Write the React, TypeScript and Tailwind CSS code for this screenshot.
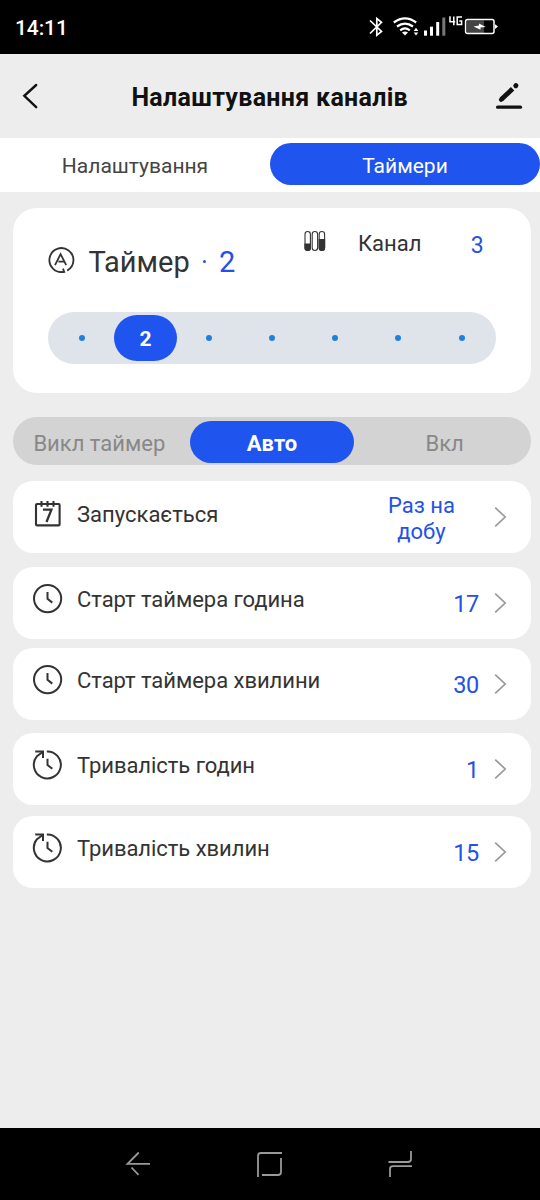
import type { ReactNode } from "react";

const CalendarIcon = () => (
  <svg className="mt-[19px] ml-[21px] h-[28px] w-[28px] shrink-0" viewBox="0 0 28 28" fill="none" stroke="#333" strokeWidth="2.1">
    <rect x="2" y="4" width="23.6" height="21.4" rx="1" />
    <path d="M7.5 1V6.8M13.5 1V6.8M19.5 1V6.8" />
    <path d="M9 9.6H17.4L12.5 22" strokeWidth="2.3" />
  </svg>
);

const ClockIcon = () => (
  <svg className="mt-[16px] ml-[19px] h-[32px] w-[32px] shrink-0" viewBox="0 0 32 32" fill="none" stroke="#333" strokeWidth="2">
    <circle cx="15.6" cy="15.6" r="13.6" />
    <path d="M15.5 9V15.8L20.3 19.6" />
  </svg>
);

const DurationIcon = () => (
  <svg className="mt-[16px] ml-[19px] h-[32px] w-[32px] shrink-0" viewBox="0 0 32 32" fill="none" stroke="#333" strokeWidth="2">
    <path d="M14.8 2.4A13.5 13.5 0 1 1 5 7.2L11 2.8" />
    <path d="M3.2 2.6H11V9" />
    <path d="M15.5 9.8V16L20.3 19.8" />
  </svg>
);

const Chevron = () => (
  <svg className="mt-[25px] h-[22px] w-[14px] shrink-0" viewBox="0 0 14 22" fill="none" stroke="#999" strokeWidth="1.7">
    <path d="M1.2 1.6L11.2 11L1.2 20.4" />
  </svg>
);

type RowProps = { icon: ReactNode; label: string; value: string; gap: string };

const Row = ({ icon, label, value, gap }: RowProps) => (
  <div className={`flex h-[72px] items-start rounded-[20px] bg-white ${gap}`}>
    <div className="flex w-[64px] shrink-0">{icon}</div>
    <span className="mt-[19px] flex-1 whitespace-nowrap text-[22px] leading-[28px] tracking-[-0.04px] text-[#333]">{label}</span>
    <span className="mt-[23px] mr-[15px] text-[23.5px] leading-[28px] tracking-[-0.3px] text-[#2451e6]">{value}</span>
    <Chevron />
    <div className="w-[23px] shrink-0" />
  </div>
);

const slots = [1, 2, 3, 4, 5, 6, 7];

export default function App() {
  return (
    <div className="flex h-[1200px] w-[540px] flex-col overflow-hidden bg-[#ededed] font-['Roboto',sans-serif]">
      <div className="flex h-[54px] shrink-0 items-start bg-black">
        <span className="mt-[14px] ml-[15px] text-[21px] leading-[28px] font-medium tracking-[-0.1px] text-white">14:11</span>
        <svg className="ml-auto h-[54px] w-[180px]" viewBox="360 0 180 54" fill="none" stroke="#fff" strokeWidth="1.7">
          <path d="M370 20.5L381.5 31.5L376.8 35.2V18.5L381.5 22.3L370 33.5" />
          <g strokeWidth="2.2">
            <path d="M393.8 22.5Q405 14.3 416.2 22.5" />
            <path d="M397 26.5Q405 20.6 413 26.5" />
            <path d="M400.2 30.3Q405 26.5 409.8 30.3" />
          </g>
          <path d="M402 32.4Q405 30.4 408 32.4L405 35.6Z" fill="#fff" stroke="none" />
          <path d="M416 27.8L418.3 31H413.7ZM416 35.6L418.3 32.5H413.7Z" fill="#fff" stroke="none" />
          <g fill="#fff" stroke="none">
            <rect x="424" y="30.5" width="3" height="5.2" />
            <rect x="430" y="26.7" width="3" height="9" />
            <rect x="436.2" y="22" width="3" height="13.7" />
            <rect x="442.3" y="17.5" width="3" height="18.2" fill="#777" />
          </g>
          <path d="M453.8 25.3V16.5M450 16.2V21.7H455.2M462 17H457.2V24.5H461.6V21H459.3" strokeWidth="1.5" />
          <rect x="467" y="20.5" width="17" height="12.5" fill="#444" stroke="none" />
          <rect x="465.6" y="19.5" width="28.4" height="14" rx="2" strokeWidth="1.5" />
          <path d="M495 24.2L498 26.6L495 29Z" fill="#fff" stroke="none" />
          <path d="M473.5 26.5L479 25.5V23.5L485.8 27L480.5 27.6V29.8Z" fill="#fff" stroke="none" />
        </svg>
      </div>

      <header className="flex h-[84px] shrink-0 items-start">
        <svg className="mt-[28px] ml-[21px] h-[28px] w-[18px]" viewBox="0 0 18 28" fill="none" stroke="#111" strokeWidth="2.4" strokeLinecap="round">
          <path d="M15.2 3L3.3 13.8L15.2 25.2" />
        </svg>
        <h1 className="mt-[28px] ml-[92.4px] w-[278px] text-[25px] leading-[32px] font-bold tracking-[0.3px] whitespace-nowrap text-[#111]">Налаштування каналів</h1>
        <svg className="mt-[26px] ml-auto mr-[15px] h-[32px] w-[30px]" viewBox="0 0 30 32" fill="none" stroke="#111" strokeLinecap="round">
          <path d="M6.2 19.6L17.6 8.8" strokeWidth="4.8" strokeLinecap="butt" />
          <path d="M6 19.8L6.8 19" strokeWidth="4.2" />
          <path d="M20.8 5.7L20.9 5.6" strokeWidth="5" />
          <path d="M2.6 27.2H25.5" strokeWidth="3.2" />
        </svg>
      </header>

      <nav className="flex h-[54px] shrink-0 items-start bg-white pt-[5px]">
        <div className="flex h-[42px] w-[270px] justify-center pt-[9px] text-[21px] leading-[28px] text-[#444]">Налаштування</div>
        <div className="flex h-[42px] w-[270px] justify-center rounded-full bg-[#1f54ee] pt-[9px] text-[21px] leading-[28px] text-white">Таймери</div>
      </nav>

      <main className="flex flex-1 flex-col pr-[9px] pl-[13px]">
        <section className="mt-[16px] h-[185px] shrink-0 rounded-[24px] bg-white">
          <div className="flex h-[104px] items-start">
            <svg className="mt-[38px] ml-[34px] h-[30px] w-[28px]" viewBox="0 0 28 30" fill="none" stroke="#333" strokeWidth="1.8">
              <path d="M17 25.8A12 12 0 1 1 20.2 24.6" />
              <path d="M16 22.6L17.2 25.9L12.8 26.1" />
              <path d="M8 19.2L13.6 8.2L19.2 19.2M11.4 15.6H17" />
            </svg>
            <span className="mt-[36px] ml-[13.4px] w-[101.6px] text-[29px] leading-[36px] whitespace-nowrap text-[#333]">Таймер</span>
            <span className="mt-[52px] ml-[13.5px] h-[2.5px] w-[2.5px] rounded-full bg-[#2451e6]" />
            <span className="mt-[36px] ml-[13px] w-[18px] text-[29px] leading-[36px] text-[#2451e6]">2</span>
            <svg className="mt-[21px] ml-[66px] h-[24px] w-[24px]" viewBox="0 0 24 24" fill="none" stroke="#333" strokeWidth="1.1">
              <rect x="2" y="2.5" width="5.4" height="19" rx="2.7" />
              <rect x="9.2" y="2.5" width="5.4" height="19" rx="2.7" />
              <rect x="16.2" y="2.5" width="5.4" height="19" rx="2.7" />
              <path d="M2 15H7.4V19Q7.4 21.5 4.7 21.5Q2 21.5 2 19ZM16.2 10.5H21.6V19Q21.6 21.5 18.9 21.5Q16.2 21.5 16.2 19Z" fill="#333" />
            </svg>
            <span className="mt-[22px] ml-[31px] w-[64px] text-[22px] leading-[28px] whitespace-nowrap text-[#333]">Канал</span>
            <span className="mt-[24px] ml-[48.7px] text-[23px] leading-[28px] text-[#2451e6]">3</span>
          </div>
          <div className="mr-[35px] ml-[35px] flex h-[52px] items-center justify-between rounded-full bg-[#dfe4ea] pr-[2.8px] pl-[2.8px]">
            {slots.map((slot) => (
              <div key={slot} className="flex w-[63.1px] shrink-0 items-center justify-center">
                {slot === 2 ? (
                  <div className="flex h-[46px] w-[63.1px] items-center justify-center rounded-full bg-[#1f54ee] pt-[2px] text-[21px] leading-[28px] font-bold text-white">2</div>
                ) : (
                  <div className="h-[6px] w-[6px] rounded-full bg-[#2080dc]" />
                )}
              </div>
            ))}
          </div>
        </section>

        <div className="mt-[24px] flex h-[48px] shrink-0 items-start rounded-full bg-[#d3d3d3] pt-[4px] text-[22px] leading-[28px] text-[#888]">
          <div className="w-[177px] pt-[9px] pl-[20.4px] whitespace-nowrap">Викл таймер</div>
          <div className="flex h-[42px] w-[164px] justify-center rounded-full bg-[#1f54ee] pt-[9px] font-bold text-white">Авто</div>
          <div className="flex-1 pt-[9px] pl-[71.5px]">Вкл</div>
        </div>

        <div className="mt-[16px] flex h-[72px] shrink-0 items-start rounded-[20px] bg-white">
          <div className="flex w-[64px]"><CalendarIcon /></div>
          <span className="mt-[20px] flex-1 text-[22px] leading-[28px] text-[#333]">Запускається</span>
          <span className="mt-[12px] mr-[22.5px] w-[100px] text-center text-[22px] leading-[26px] text-[#2451e6]">Раз на<br />добу</span>
          <Chevron />
          <div className="w-[23px] shrink-0" />
        </div>
        <Row icon={<ClockIcon />} label="Старт таймера година" value="17" gap="mt-[14px]" />
        <Row icon={<ClockIcon />} label="Старт таймера хвилини" value="30" gap="mt-[9px]" />
        <Row icon={<DurationIcon />} label="Тривалість годин" value="1" gap="mt-[13px]" />
        <Row icon={<DurationIcon />} label="Тривалість хвилин" value="15" gap="mt-[11px]" />
      </main>

      <footer className="h-[72px] shrink-0 bg-black">
        <svg className="h-[72px] w-[540px]" viewBox="0 1128 540 72" fill="none" stroke="#999" strokeWidth="1.8">
          <path d="M138.8 1152.5L127.5 1163.8H150M131.5 1167.5L138.5 1174.8" />
          <path d="M258 1177V1156Q258 1153 261 1153H282M281 1158V1172Q281 1175 278 1175H262" />
          <path d="M388.5 1162H408Q411 1162 411 1159V1151M412 1166.2H393Q390 1166.2 390 1169V1177" />
        </svg>
      </footer>
    </div>
  );
}
